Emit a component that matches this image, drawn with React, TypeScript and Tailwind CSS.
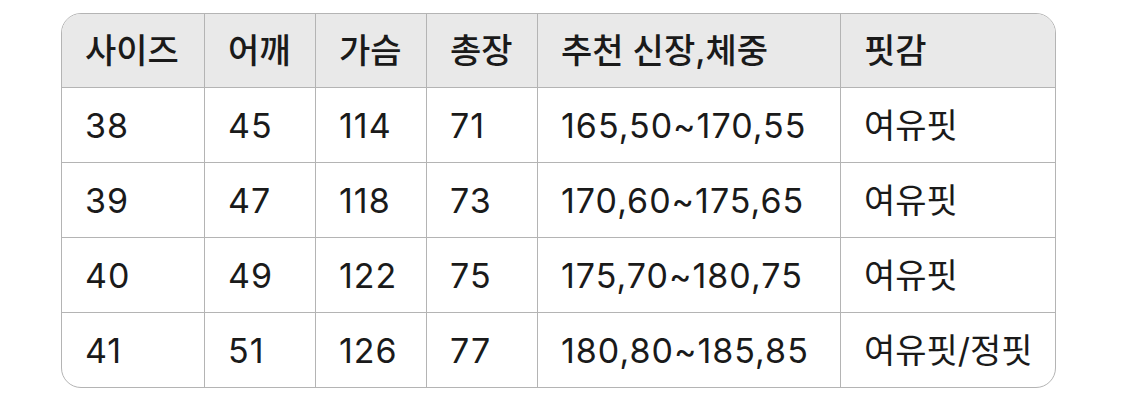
const headers = ['사이즈', '어깨', '가슴', '총장', '추천 신장,체중', '핏감'];

const rows = [
  ['38', '45', '114', '71', '165,50~170,55', '여유핏'],
  ['39', '47', '118', '73', '170,60~175,65', '여유핏'],
  ['40', '49', '122', '75', '175,70~180,75', '여유핏'],
  ['41', '51', '126', '77', '180,80~185,85', '여유핏/정핏'],
];

export default function App() {
  return (
    <div
      className="w-[1125px] h-[410px] bg-white pt-[13px] pl-[61px]"
      style={{ fontFamily: '"Inter", "Noto Sans CJK KR", sans-serif' }}
    >
      <div className="w-[995px] rounded-[20px] border border-[#b4b4b4] overflow-hidden">
        <div className="grid grid-cols-[143px_111px_111px_111px_303px_1fr] text-[34px] text-[#1a1a1a]">
          {headers.map((h, i) => (
            <div
              key={h}
              className={`h-[74px] bg-[#e9e9e9] border-b border-[#b4b4b4] flex items-center pl-[23px] font-medium ${
                i < headers.length - 1 ? 'border-r' : ''
              }`}
            >
              {h}
            </div>
          ))}
          {rows.map((row, r) =>
            row.map((cell, c) => (
              <div
                key={`${r}-${c}`}
                className={`flex items-center pl-[23px] border-[#b4b4b4] ${
                  r < rows.length - 1 ? 'h-[75px] border-b' : 'h-[74px]'
                } ${c < row.length - 1 ? 'border-r tracking-[1px]' : ''}`}
              >
                {cell}
              </div>
            ))
          )}
        </div>
      </div>
    </div>
  );
}
